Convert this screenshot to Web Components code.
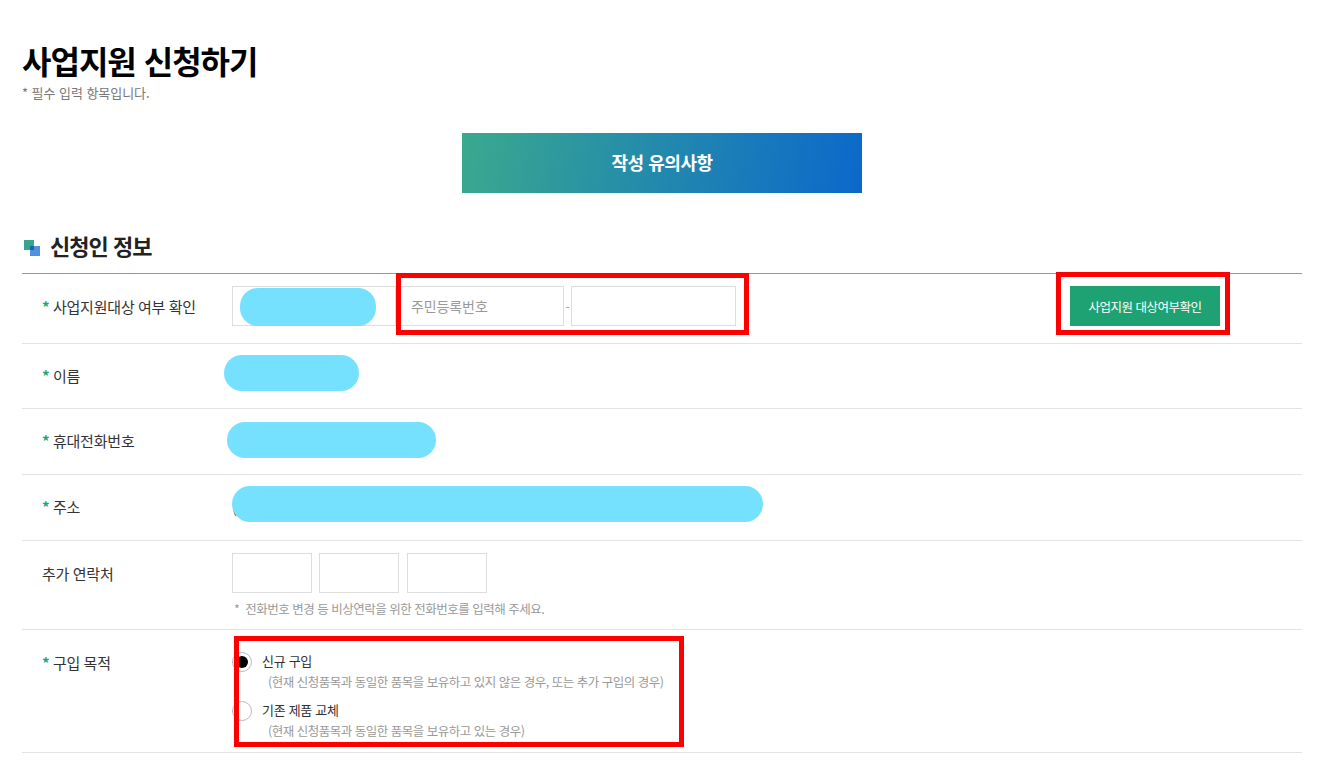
<!DOCTYPE html>
<html lang="ko">
<head>
<meta charset="utf-8">
<title>사업지원 신청하기</title>
<style>
    html, body{
        margin: 0;
        background: #fff;
        font-family: "Noto Sans CJK KR", "Noto Sans", sans-serif;
    }
    .line{ display: flex; align-items: center; }
    .small-gap{ gap: 7px; }
    .small-gap text-field:last-child{ margin-left: 1px; }
    .dash{ flex: none; width: 7px; text-align: center; font-size: 12px; color: #999; }
    .hint{ margin-top: 7px; padding-left: 2px; font-size: 12.5px; line-height: 18px; letter-spacing: -0.5px; color: #999; white-space: nowrap; }
    .peek{ display: block; line-height: 40px; font-size: 15px; color: #333; margin-top: 1px; }
</style>
</head>
<body>
<apply-page>
    <page-title slot="head" note="* 필수 입력 항목입니다.">사업지원 신청하기</page-title>
    <notice-banner slot="head">작성 유의사항</notice-banner>
    <section-heading slot="head">신청인 정보</section-heading>

    <form-row label="사업지원대상 여부 확인" required style="--row-h:69px">
        <div class="line">
            <text-field style="width:164px"></text-field>
            <text-field style="width:164px;margin-left:4px" placeholder="주민등록번호"></text-field>
            <span class="dash">-</span>
            <text-field style="width:165px"></text-field>
            <check-button>사업지원 대상여부확인</check-button>
        </div>
    </form-row>
    <form-row label="이름" required style="--row-h:64px;--label-top:12px"></form-row>
    <form-row label="휴대전화번호" required style="--row-h:65px;--label-top:12px"></form-row>
    <form-row label="주소" required style="--row-h:65px;--label-top:12px"><span class="peek">(</span></form-row>
    <form-row label="추가 연락처" style="--row-h:88px">
        <div class="line small-gap">
            <text-field style="width:80px"></text-field>
            <text-field style="width:80px"></text-field>
            <text-field style="width:80px"></text-field>
        </div>
        <div class="hint">*&nbsp; 전화번호 변경 등 비상연락을 위한 전화번호를 입력해 주세요.</div>
    </form-row>
    <form-row label="구입 목적" required style="--row-h:122px">
        <radio-option style="margin-top:10px" checked note="(현재 신청품목과 동일한 품목을 보유하고 있지 않은 경우, 또는 추가 구입의 경우)">신규 구입</radio-option>
        <radio-option note="(현재 신청품목과 동일한 품목을 보유하고 있는 경우)">기존 제품 교체</radio-option>
    </form-row>

    <!-- redactions and red marks lie on top of the form -->
    <redact-blob slot="over" style="left:240px;top:288px;width:136px;height:38px"></redact-blob>
    <redact-blob slot="over" style="left:224px;top:355px;width:135px;height:36px"></redact-blob>
    <redact-blob slot="over" style="left:227px;top:422px;width:209px;height:36px"></redact-blob>
    <redact-blob slot="over" style="left:232px;top:486px;width:531px;height:36px"></redact-blob>
    <mark-box slot="over" style="left:396px;top:273px;width:353px;height:62px"></mark-box>
    <mark-box slot="over" style="left:1056px;top:272px;width:174px;height:63px"></mark-box>
    <mark-box slot="over" style="left:234px;top:636px;width:450px;height:111px"></mark-box>
</apply-page>

<script>
class ApplyPage extends HTMLElement {
    constructor(){
        super();
        this.attachShadow({mode: "open"}).innerHTML = `
        <style>
            :host{
                display: block;
                position: relative;
                height: 770px;
                overflow: hidden;
                padding: 0 41px 0 22px;
                box-sizing: border-box;
            }
        </style>
        <slot name="head"></slot>
        <slot></slot>
        <slot name="over"></slot>
        `;
    }
}

class PageTitle extends HTMLElement {
    constructor(){
        super();
        this.attachShadow({mode: "open"}).innerHTML = `
        <style>
            :host{
                display: block;
                padding-top: 38px;
            }
            h1{
                margin: 0;
                font-size: 32px;
                line-height: 44px;
                font-weight: 700;
                letter-spacing: -1px;
                color: #000;
            }
            p{
                margin: 2px 0 0;
                font-size: 13px;
                line-height: 18px;
                letter-spacing: -0.05px;
                color: #777;
            }
        </style>
        <h1><slot></slot></h1>
        <p>${this.getAttribute("note")}</p>
        `;
    }
}

class NoticeBanner extends HTMLElement {
    constructor(){
        super();
        this.attachShadow({mode: "open"}).innerHTML = `
        <style>
            :host{
                display: flex;
                align-items: center;
                justify-content: center;
                width: 400px;
                height: 60px;
                box-sizing: border-box;
                padding-bottom: 2px;
                margin: 31px 0 0 440px;
                background: linear-gradient(100deg, #3aa98e 0%, #0b68cc 100%);
                color: #fff;
                font-size: 18px;
                font-weight: 700;
                letter-spacing: -0.45px;
            }
        </style>
        <slot></slot>
        `;
    }
}

class SectionHeading extends HTMLElement {
    constructor(){
        super();
        this.attachShadow({mode: "open"}).innerHTML = `
        <style>
            :host{
                display: flex;
                align-items: center;
                gap: 10px;
                height: 81px;
                box-sizing: border-box;
                padding: 30px 0 0 2px;
                border-bottom: 1px solid #999;
                width: 1280px;
                color: #222;
                font-size: 22px;
                font-weight: 700;
                letter-spacing: -0.95px;
            }
            svg{ display: block; flex: none; }
            span{ margin-top: -6px; }
        </style>
        <svg width="16" height="16" viewBox="0 0 16 16">
            <rect x="0" y="0" width="10" height="10" fill="#36a58c"/>
            <rect x="6" y="6" width="10" height="10" fill="#4f93dc"/>
            <rect x="6" y="6" width="4" height="4" fill="#17689f"/>
        </svg>
        <span><slot></slot></span>
        `;
    }
}

class FormRow extends HTMLElement {
    constructor(){
        super();
        const star = this.hasAttribute("required") ? `<b>*</b> ` : "";
        this.attachShadow({mode: "open"}).innerHTML = `
        <style>
            :host{
                display: grid;
                grid-template-columns: 210px 1fr;
                width: 1280px;
                height: var(--row-h);
                border-bottom: 1px solid #e2e2e2;
                font-size: 15px;
                color: #333;
            }
            .label{
                padding: var(--label-top, 13px) 0 0 20px;
                line-height: 40px;
                letter-spacing: -0.2px;
                word-spacing: -0.5px;
                white-space: nowrap;
            }
            b{ color: #1fa574; font-weight: 700; }
            .body{ padding-top: 12px; min-width: 0; }
        </style>
        <div class="label">${star}${this.getAttribute("label")}</div>
        <div class="body"><slot></slot></div>
        `;
    }
}

class TextField extends HTMLElement {
    constructor(){
        super();
        const ph = this.getAttribute("placeholder") || "";
        this.attachShadow({mode: "open"}).innerHTML = `
        <style>
            :host{
                display: flex;
                align-items: center;
                flex: none;
                height: 40px;
                box-sizing: border-box;
                padding-left: 10px;
                border: 1px solid #ddd;
                background: #fff;
                font-size: 14px;
                letter-spacing: -0.1px;
                color: #999;
            }
        </style>
        <span>${ph}</span>
        `;
    }
}

class CheckButton extends HTMLElement {
    constructor(){
        super();
        this.attachShadow({mode: "open"}).innerHTML = `
        <style>
            :host{
                display: flex;
                align-items: center;
                justify-content: center;
                width: 150px;
                height: 40px;
                margin-left: 334px;
                flex: none;
                background: #1fa273;
                color: #fff;
                font-size: 12.5px;
                letter-spacing: -0.5px;
                white-space: nowrap;
            }
        </style>
        <slot></slot>
        `;
    }
}

class RadioOption extends HTMLElement {
    constructor(){
        super();
        const dot = this.hasAttribute("checked") ? `<i></i>` : "";
        this.attachShadow({mode: "open"}).innerHTML = `
        <style>
            :host{
                display: grid;
                grid-template-columns: 30px 1fr;
                grid-template-rows: 20px 20px;
                height: 49px;
            }
            .ring{
                width: 20px;
                height: 20px;
                box-sizing: border-box;
                border: 1px solid #bbb;
                border-radius: 50%;
                background: #fff;
                display: flex;
                align-items: center;
                justify-content: center;
            }
            i{
                width: 12px;
                height: 12px;
                border-radius: 50%;
                background: #000;
            }
            .text{
                margin-top: -1px;
                font-size: 13px;
                line-height: 20px;
                letter-spacing: -0.3px;
                color: #333;
            }
            .note{
                grid-column: 2;
                padding-left: 6px;
                font-size: 12.5px;
                line-height: 20px;
                letter-spacing: -0.5px;
                color: #999;
                white-space: nowrap;
            }
        </style>
        <span class="ring">${dot}</span>
        <span class="text"><slot></slot></span>
        <span class="note">${this.getAttribute("note")}</span>
        `;
    }
}

class RedactBlob extends HTMLElement {
    constructor(){
        super();
        this.attachShadow({mode: "open"}).innerHTML = `
        <style>
            :host{
                display: block;
                position: absolute;
                background: #76e0ff;
                border-radius: 18px;
            }
        </style>
        `;
    }
}

class MarkBox extends HTMLElement {
    constructor(){
        super();
        this.attachShadow({mode: "open"}).innerHTML = `
        <style>
            :host{
                display: block;
                position: absolute;
                box-sizing: border-box;
                border: 5px solid #f00;
            }
        </style>
        `;
    }
}

customElements.define("apply-page", ApplyPage);
customElements.define("page-title", PageTitle);
customElements.define("notice-banner", NoticeBanner);
customElements.define("section-heading", SectionHeading);
customElements.define("form-row", FormRow);
customElements.define("text-field", TextField);
customElements.define("check-button", CheckButton);
customElements.define("radio-option", RadioOption);
customElements.define("redact-blob", RedactBlob);
customElements.define("mark-box", MarkBox);
</script>
</body>
</html>
